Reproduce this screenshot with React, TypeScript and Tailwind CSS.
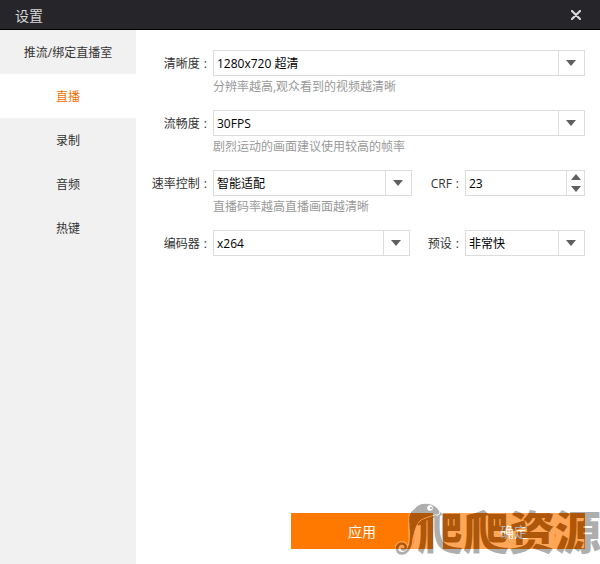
import { useState } from 'react';
import type { ReactNode } from 'react';

const tabs = ['推流/绑定直播室', '直播', '录制', '音频', '热键'];

const Arrow = ({ up = false }: { up?: boolean }) => (
  <svg width="10" height="6" viewBox="0 0 10 6" aria-hidden="true">
    <path d={up ? 'M0 6L5 0L10 6Z' : 'M0 0H10L5 6Z'} fill="#5f5f5f" />
  </svg>
);

interface FieldProps {
  id: string;
  label: string;
  hint?: string;
  className?: string;
  labelClass?: string;
  children: ReactNode;
}

const Field = ({ id, label, hint, className = '', labelClass = 'w-[77px]', children }: FieldProps) => (
  <div className={`flex ${className}`}>
    <label
      htmlFor={id}
      className={`${labelClass} flex shrink-0 justify-end gap-1 whitespace-nowrap pr-1.5 leading-7 text-[#333]`}
    >
      {label}
      <span>:</span>
    </label>
    <div className="min-w-0 flex-1">
      {children}
      {hint && <p className="whitespace-nowrap leading-[22px] text-[#999]">{hint}</p>}
    </div>
  </div>
);

const Select = ({ id, options }: { id: string; options: string[] }) => (
  <div className="relative h-[26px] border border-[#dcdcdc] bg-white">
    <select id={id} className="block h-full w-full appearance-none bg-transparent pl-[3px] pr-7 pt-0.5 text-black outline-none">
      {options.map((option) => (
        <option key={option}>{option}</option>
      ))}
    </select>
    <span className="pointer-events-none absolute inset-y-0 right-0 flex w-[26px] items-center justify-center border-l border-[#dcdcdc] pr-0.5">
      <Arrow />
    </span>
  </div>
);

const Stepper = ({ id }: { id: string }) => {
  const [value, setValue] = useState(23);

  return (
    <div className="flex h-[26px] border border-[#dcdcdc] bg-white">
      <input
        id={id}
        type="text"
        value={value}
        onChange={(e) => setValue(Number(e.target.value) || 0)}
        className="w-full min-w-0 flex-1 pl-[3px] pt-0.5 text-black outline-none"
      />
      <div className="flex w-[18px] shrink-0 flex-col border-l border-[#dcdcdc]">
        <button type="button" aria-label="+" onClick={() => setValue(value + 1)} className="flex flex-1 items-center justify-center">
          <Arrow up />
        </button>
        <button type="button" aria-label="-" onClick={() => setValue(value - 1)} className="flex flex-1 items-center justify-center">
          <Arrow />
        </button>
      </div>
    </div>
  );
};

// one opacity for the whole group, so the white rim and the black glyphs tint the buttons evenly
const Watermark = () => (
  <div className="pointer-events-none absolute -right-4 -top-3 h-[60px] w-[206px] opacity-35">
    <span className="absolute right-0 top-0 whitespace-nowrap text-[46px] font-black leading-[60px] text-[#1a1a1a] [-webkit-text-stroke:12px_white] [paint-order:stroke_fill]">
      爬爬资源
    </span>
    <svg width="60" height="60" viewBox="0 0 60 60" className="absolute left-0 top-0" aria-hidden="true">
      <path
        d="M16 22C15 32 18 40 14 47C11 54 3 54 2 48C2 43 7 41 10 44C12 47 9 50 7 48"
        fill="none"
        stroke="#fff"
        strokeWidth="5"
        strokeLinecap="round"
      />
      <path
        d="M14 24C13 14 14 12 20 7C25 1 31 2 36 3C41 5 44 8 45 12Q44 15 40 14C34 16 29 17 25 20C21 24 20 30 18 38C14 33 14 28 14 24Z"
        fill="#1a1a1a"
        stroke="#fff"
        strokeWidth="1"
      />
      <path
        d="M17 22C15 32 18 40 14 47C11 54 3 54 2 48C2 43 7 41 10 44C12 47 9 50 7 48"
        fill="none"
        stroke="#1a1a1a"
        strokeWidth="2.6"
        strokeLinecap="round"
      />
      <path d="M23 24L27 20L41 15M27 20L26 24" fill="none" stroke="#1a1a1a" strokeWidth="2" />
      <circle cx="35" cy="7" r="2.8" fill="#fff" />
      <circle cx="36" cy="7" r="1" fill="#000" />
    </svg>
  </div>
);

const App = () => {
  const [active, setActive] = useState(1);

  return (
    <div className="flex min-h-screen flex-col overflow-hidden bg-white font-['Open_Sans','Noto_Sans_CJK_SC',sans-serif] text-xs">
      <header className="flex h-[30px] items-center justify-between border-b border-black bg-[#25252a] px-[15px] text-[#d8d8d8]">
        <h1 className="pt-0.5 text-sm">设置</h1>
        <button type="button" aria-label="关闭" className="mr-1">
          <svg width="10" height="10" viewBox="0 0 10 10" aria-hidden="true">
            <path d="M1 1L9 9M9 1L1 9" stroke="#d8d8d8" strokeWidth="2.2" strokeLinecap="round" />
          </svg>
        </button>
      </header>

      <div className="flex flex-1">
        <nav className="flex w-[136px] shrink-0 flex-col bg-[#f1f1f1]">
          {tabs.map((tab, i) => (
            <button
              key={tab}
              type="button"
              onClick={() => setActive(i)}
              className={`h-11 pt-0.5 ${i === active ? 'bg-white text-[#f07000]' : 'text-[#333]'}`}
            >
              {tab}
            </button>
          ))}
        </nav>

        <main className="flex min-w-0 flex-1 flex-col pb-[15px] pr-[15px] pt-5">
          <Field id="quality" label="清晰度" hint="分辨率越高,观众看到的视频越清晰" className="h-[60px]">
            <Select id="quality" options={['1280x720 超清']} />
          </Field>
          <Field id="fps" label="流畅度" hint="剧烈运动的画面建议使用较高的帧率" className="h-[60px]">
            <Select id="fps" options={['30FPS']} />
          </Field>
          <div className="flex h-[60px]">
            <Field id="rate" label="速率控制" hint="直播码率越高直播画面越清晰" className="flex-1">
              <Select id="rate" options={['智能适配']} />
            </Field>
            <Field id="crf" label="CRF" className="w-[173px]" labelClass="w-[53px]">
              <Stepper id="crf" />
            </Field>
          </div>
          <div className="flex h-[60px]">
            <Field id="encoder" label="编码器" className="flex-1">
              <Select id="encoder" options={['x264']} />
            </Field>
            <Field id="preset" label="预设" className="w-[175px]" labelClass="w-[55px]">
              <Select id="preset" options={['非常快']} />
            </Field>
          </div>

          <div className="relative mt-auto flex justify-end gap-2.5 self-end text-sm text-white">
            <button type="button" className="h-9 w-[142px] bg-[#ff7800] pt-0.5">应用</button>
            <button type="button" className="h-9 w-[142px] bg-[#ff7800] pt-0.5">确定</button>
            <Watermark />
          </div>
        </main>
      </div>
    </div>
  );
};

export default App;
